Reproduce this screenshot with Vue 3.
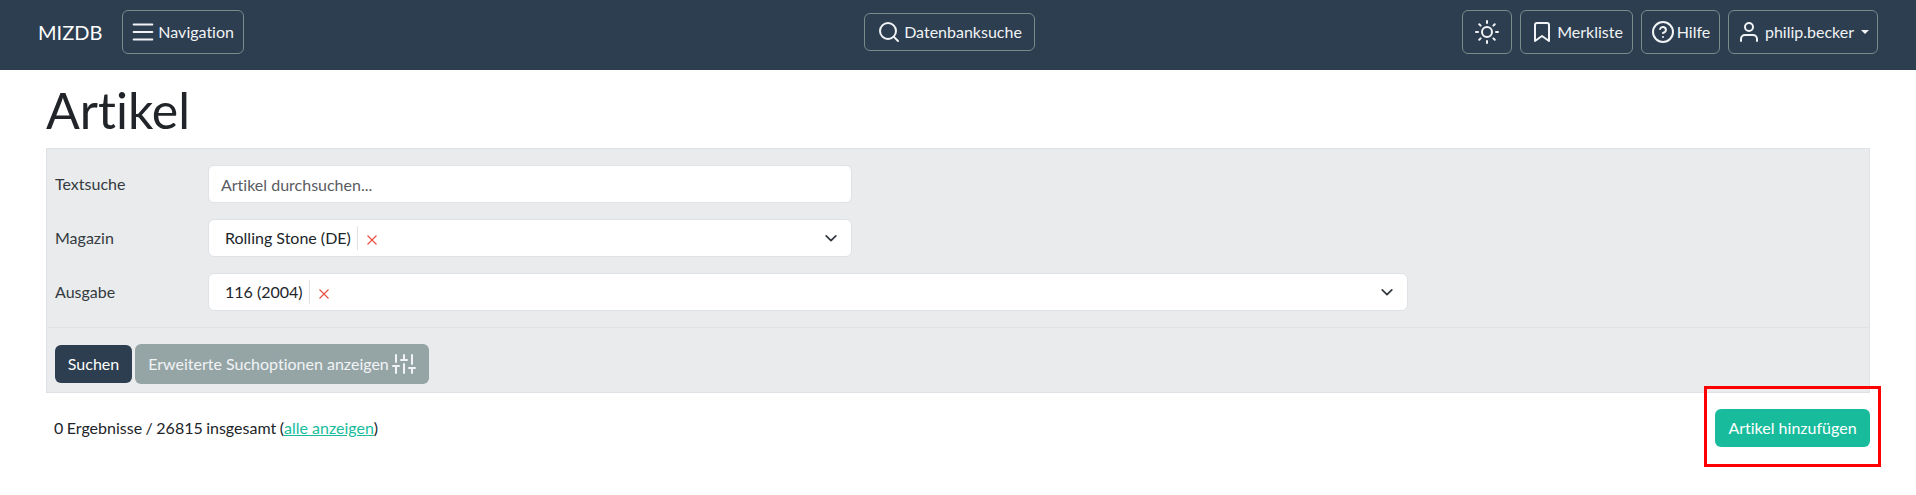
<script setup>
const rows = [
  { label: 'Magazin', tag: 'Rolling Stone (DE)', cls: 'short' },
  { label: 'Ausgabe', tag: '116 (2004)', cls: 'long' }
]
</script>

<template>
  <div class="page">
    <header class="nav">
      <div class="nav-left">
        <span class="brand">MIZDB</span>
        <button class="nb tall nav-toggle">
          <svg width="30" height="30" viewBox="0 0 16 16" fill="currentColor"><path fill-rule="evenodd" d="M2.500 12a.5.5 0 0 1 .5-.5h10a.5.5 0 0 1 0 1H3a.5.5 0 0 1-.5-.5m0-4a.5.5 0 0 1 .5-.5h10a.5.5 0 0 1 0 1H3a.5.5 0 0 1-.5-.5m0-4a.5.5 0 0 1 .5-.5h10a.5.5 0 0 1 0 1H3a.5.5 0 0 1-.5-.5"/></svg>
          <span>Navigation</span>
        </button>
      </div>
      <div class="nav-center">
        <button class="nb search">
          <svg class="ic" width="24" height="24" viewBox="0 0 24 24"><circle cx="11" cy="11" r="8"/><path d="M21 21l-4.350-4.350"/></svg>
          <span>Datenbanksuche</span>
        </button>
      </div>
      <div class="nav-right">
        <button class="nb tall theme" aria-label="Theme">
          <svg class="ic" width="24" height="24" viewBox="0 0 24 24"><circle cx="12" cy="12" r="5"/><path d="M12 1v2M12 21v2M4.220 4.220l1.420 1.420M18.360 18.360l1.420 1.420M1 12h2M21 12h2M4.220 19.780l1.420-1.420M18.360 5.640l1.420-1.420"/></svg>
        </button>
        <button class="nb tall mark-btn">
          <svg class="ic" width="24" height="24" viewBox="0 0 24 24"><path d="M19 21l-7-5-7 5V5a2 2 0 0 1 2-2h10a2 2 0 0 1 2 2z"/></svg>
          <span>Merkliste</span>
        </button>
        <button class="nb tall help">
          <svg class="ic" width="24" height="24" viewBox="0 0 24 24"><circle cx="12" cy="12" r="10"/><path d="M9.090 9a3 3 0 0 1 5.830 1c0 2-3 3-3 3M12 17h.010"/></svg>
          <span>Hilfe</span>
        </button>
        <button class="nb tall user">
          <svg class="ic" width="24" height="24" viewBox="0 0 24 24"><path d="M20 21v-2a4 4 0 0 0-4-4H8a4 4 0 0 0-4 4v2"/><circle cx="12" cy="7" r="4"/></svg>
          <span>philip.becker</span>
          <i class="caret"></i>
        </button>
      </div>
    </header>

    <main class="main">
      <h1 class="title">Artikel</h1>
      <section class="filter">
        <div class="fields">
          <div class="field">
            <label>Textsuche</label>
            <input class="control short" placeholder="Artikel durchsuchen..." />
          </div>
          <div v-for="r in rows" :key="r.label" class="field">
            <label>{{ r.label }}</label>
            <div class="control select" :class="r.cls">
              <span class="tag">{{ r.tag }}</span>
              <svg class="remove" width="10" height="10" viewBox="0 0 10 10" fill="none" stroke="#e74c3c" stroke-width="1.100"><path d="M.5.500l9 9M9.500.500l-9 9"/></svg>
              <svg class="chev" width="14" height="14" viewBox="0 0 16 16" fill="none" stroke="#343a40" stroke-width="2" stroke-linecap="round" stroke-linejoin="round"><path d="M2.500 5.500 8 11l5.500-5.500"/></svg>
            </div>
          </div>
        </div>
        <div class="actions">
          <button class="btn dark">Suchen</button>
          <button class="btn grey">
            <span>Erweiterte Suchoptionen anzeigen</span>
            <svg class="ic" width="24" height="24" viewBox="0 0 24 24"><path d="M4 21v-7M4 10V3M12 21v-9M12 8V3M20 21v-5M20 12V3M1 14h6M9 8h6M17 16h6"/></svg>
          </button>
        </div>
      </section>
      <div class="results">
        <p>0 Ergebnisse / 26815 insgesamt (<a href="#">alle anzeigen</a>)</p>
        <div class="add-wrap">
          <button class="btn green">Artikel hinzufügen</button>
          <span class="mark"></span>
        </div>
      </div>
    </main>
  </div>
</template>

<style>
html, body { margin: 0; background: #fff; }
</style>

<style scoped>
.page { min-height: 495px; font-family: Lato, "Liberation Sans", sans-serif; font-size: 16px; line-height: 1.5; color: #212529; font-variant-ligatures: none; }
.ic { fill: none; stroke: currentColor; stroke-width: 2; stroke-linecap: round; stroke-linejoin: round; flex: none; }
.nav { height: 70px; box-sizing: border-box; background: #2c3e50; display: grid; grid-template-columns: 826px auto 1fr; align-items: center; padding: 0 38px 6px; color: #fff; }
.nav-left, .nav-right { display: flex; align-items: center; gap: 8px; }
.nav-right { justify-content: flex-end; }
.nav-center { display: flex; }
.brand { font-size: 20px; margin-right: 12px; }
.nb { display: flex; align-items: center; justify-content: center; gap: 3px; box-sizing: border-box; height: 38px; background: transparent; border: 1px solid #7b8a8b; border-radius: 6px; font: inherit; font-variant-ligatures: none; padding: 0; color: #f1f3f5; }
.tall { height: 44px; }
.search { gap: 3px; width: 171px; }
.nav-toggle { width: 122px; gap: 0; justify-content: flex-start; padding-left: 5px; }
.theme { width: 50px; }
.mark-btn { width: 113px; }
.help { width: 79px; gap: 2px; }
.user { width: 150px; gap: 4px; }
.user i.caret { width: 0; height: 0; border: 4.800px solid transparent; border-top-color: currentColor; border-bottom: 0; margin-left: 3px; }
.main { padding: 0 46px; }
.title { margin: 0; box-sizing: border-box; padding-top: 2px; font-size: 50px; font-weight: 400; line-height: 76px; height: 78px; }
.filter { background: #e9ebed; border: 1px solid #dee2e6; }
.fields { padding: 16px 8px; display: flex; flex-direction: column; gap: 16px; border-bottom: 1px solid #dee2e6; }
.field { display: flex; align-items: center; }
.field label { width: 153px; flex: none; color: #343a40; }
.control { box-sizing: border-box; height: 38px; background: #fff; border: 1px solid #dee2e6; border-radius: 6px; font: inherit; font-variant-ligatures: none; color: #212529; }
input.control { padding: 0 12px; outline: none; }
input.control::placeholder { color: #595c5f; opacity: 1; }
.short { width: 644px; }
.long { width: 1200px; }
.select { display: flex; align-items: center; padding-left: 16px; padding-right: 13px; }
.tag { padding-right: 6px; border-right: 1px solid #dee2e6; }
.remove { margin-left: 9px; margin-top: 4px; }
.chev { margin-left: auto; }
.actions { padding: 16px 8px 8px; display: flex; align-items: center; gap: 3px; }
.btn { box-sizing: border-box; border: 0; border-radius: 6px; font: inherit; font-variant-ligatures: none; color: #fff; display: inline-flex; align-items: center; justify-content: center; }
.dark { background: #2c3e50; height: 38px; width: 77px; }
.grey { background: #95a5a6; height: 40px; width: 294px; gap: 3px; color: #f1f3f5; }
.results { display: flex; align-items: center; justify-content: space-between; margin-top: 16px; padding-left: 8px; height: 38px; }
.results p { margin: 0; word-spacing: -0.6px; }
.results a { color: #18bc9c; text-decoration: underline; word-spacing: 0; }
.green { background: #18bc9c; height: 38px; width: 155px; }
.add-wrap { position: relative; display: flex; }
.mark { position: absolute; left: -11px; top: -23px; width: 177px; height: 81px; box-sizing: border-box; border: 3px solid #f00; pointer-events: none; }
</style>
